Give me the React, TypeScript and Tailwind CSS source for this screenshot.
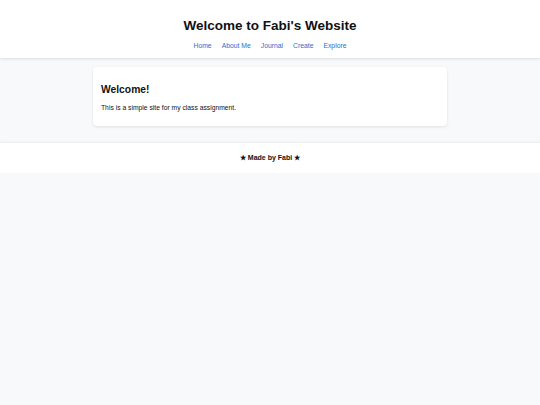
import React from "react";

const links = ["Home", "About Me", "Journal", "Create", "Explore"];

export default function App() {
  return (
    <div
      className="min-h-[405px] bg-[#f8f9fa] text-[#111]"
      style={{ fontFamily: '"Liberation Sans", Arial, sans-serif' }}
    >
      <header className="relative z-10 flex h-[58px] flex-col items-center bg-white pt-[16px] shadow-[0_1px_3px_rgba(0,0,0,0.12)]">
        <h1 className="text-[13.5px] font-bold leading-[20px]">Welcome to Fabi's Website</h1>
        <nav className="mt-[5px] flex gap-[10px] text-[6.8px] leading-[10px]">
          {links.map((l) => (
            <a key={l} href="#" className="text-[#1f6fd0]">
              {l}
            </a>
          ))}
        </nav>
      </header>

      <main className="px-[93px] pb-[17px] pt-[9px]">
        <section className="rounded-[4px] bg-white px-[8px] pb-[13px] pt-[16px] shadow-[0_1px_3px_rgba(0,0,0,0.1)]">
          <h2 className="text-[10.3px] font-bold leading-[14px]">Welcome!</h2>
          <p className="mt-[6px] text-[6.75px] leading-[10px]">
            This is a simple site for my class assignment.
          </p>
        </section>
      </main>

      <footer className="flex h-[30px] items-center justify-center bg-white pt-[1px] text-[7px] font-bold shadow-[0_-1px_2px_rgba(0,0,0,0.06)]">
        ★ Made by Fabi ★
      </footer>
    </div>
  );
}
